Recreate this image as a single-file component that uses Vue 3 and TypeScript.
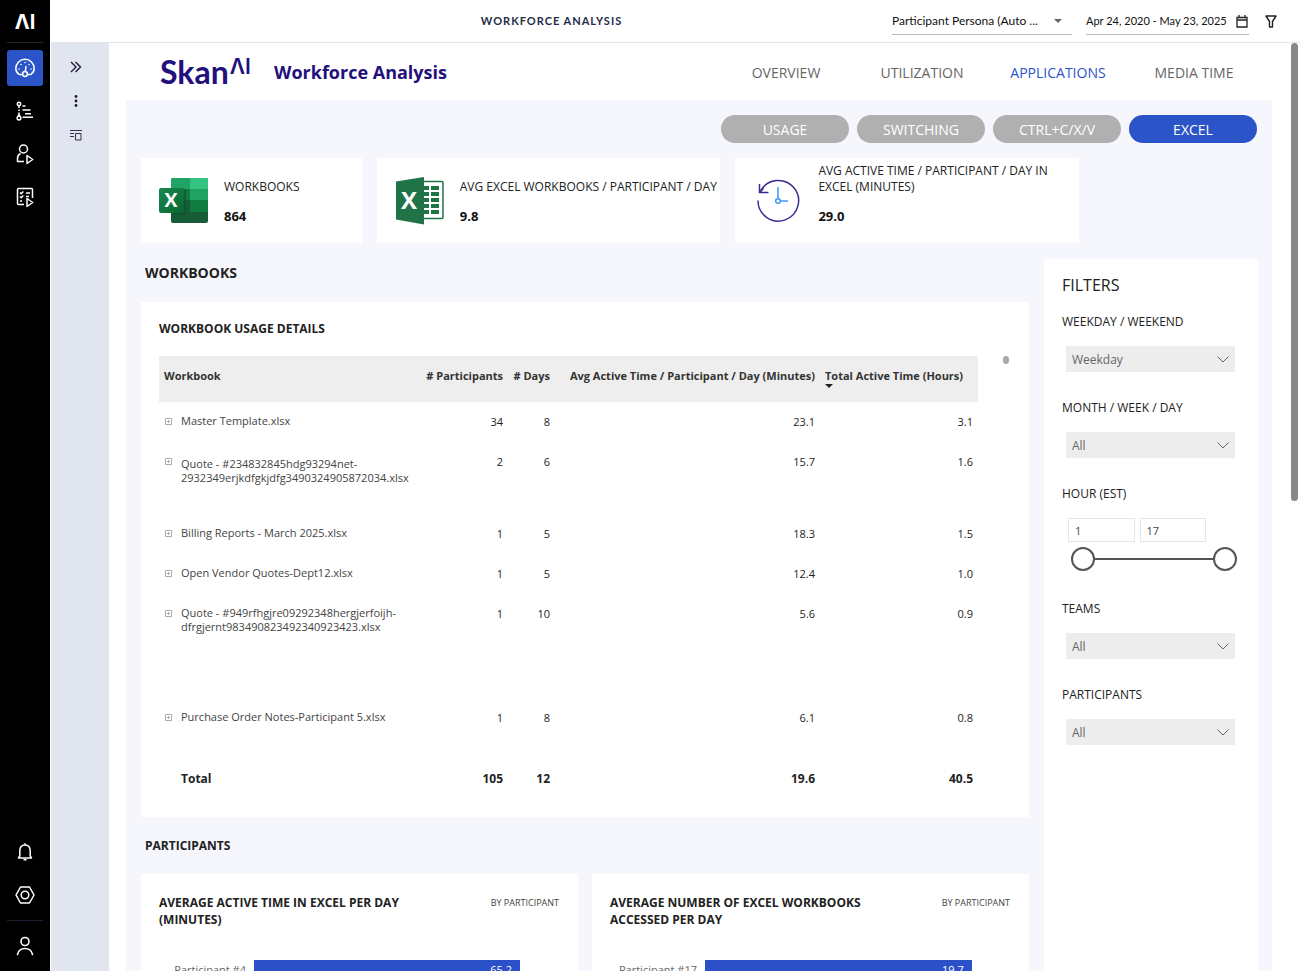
<script setup lang="ts">
import { ref } from 'vue'

interface WorkbookRow {
  name: string[]
  participants: number
  days: number
  avg: string
  total: string
  size: 'short' | 'medium' | 'tall' | 'last'
}

const tabs = ['OVERVIEW', 'UTILIZATION', 'APPLICATIONS', 'MEDIA TIME']
const activeTab = ref('APPLICATIONS')
const views = ['USAGE', 'SWITCHING', 'CTRL+C/X/V', 'EXCEL']
const activeView = ref('EXCEL')

const rows: WorkbookRow[] = [
  { name: ['Master Template.xlsx'], participants: 34, days: 8, avg: '23.1', total: '3.1', size: 'short' },
  { name: ['Quote - #234832845hdg93294net-', '2932349erjkdfgkjdfg3490324905872034.xlsx'], participants: 2, days: 6, avg: '15.7', total: '1.6', size: 'medium' },
  { name: ['Billing Reports - March 2025.xlsx'], participants: 1, days: 5, avg: '18.3', total: '1.5', size: 'short' },
  { name: ['Open Vendor Quotes-Dept12.xlsx'], participants: 1, days: 5, avg: '12.4', total: '1.0', size: 'short' },
  { name: ['Quote - #949rfhgjre09292348hergjerfoijh-', 'dfrgjernt983490823492340923423.xlsx'], participants: 1, days: 10, avg: '5.6', total: '0.9', size: 'tall' },
  { name: ['Purchase Order Notes-Participant 5.xlsx'], participants: 1, days: 8, avg: '6.1', total: '0.8', size: 'last' },
]

const charts = [
  { title: 'AVERAGE ACTIVE TIME IN EXCEL PER DAY (MINUTES)', label: 'Participant #4', value: 65.2, max: 75 },
  { title: 'AVERAGE NUMBER OF EXCEL WORKBOOKS ACCESSED PER DAY', label: 'Participant #17', value: 19.7, max: 22.6 },
]

const hourFrom = ref(1)
const hourTo = ref(17)
</script>

<template>
  <div class="app">
    <nav class="rail" aria-label="Main">
      <div class="brand">ΛI</div>
      <hr class="rule">
      <button class="rail-btn active" aria-label="Dashboard">
        <svg width="22" height="22" viewBox="0 0 22 22" fill="none" stroke="currentColor" stroke-width="1.5" stroke-linecap="round">
          <path d="M8.500 17.500H5.200C3 16 1.800 14 1.800 11.500a9.200 9.200 0 0 1 18.400 0c0 2.500-1.200 4.500-3.400 6H13.500" />
          <circle cx="11" cy="17" r="2.400" />
          <path d="M11.300 14.500 12 9.500" />
          <path d="M5 12h.1M17 12h.1M7 7.500h.1M11 5.500h.1M15 7.500h.1" />
        </svg>
      </button>
      <button class="rail-btn" aria-label="Process">
        <svg width="22" height="22" viewBox="0 0 22 22" fill="none" stroke="currentColor" stroke-width="1.500">
          <circle cx="5" cy="4" r="1.700" /><path d="m5 14.500 1.800 3a1.900 1.900 0 1 1-3.600 0z" />
          <path d="M5 5.700v2.300M5 9.500v1.500M5 12.500v2M8.500 6h3M8.500 10h8M11 13.800h6M8.500 17.200h10.500" />
        </svg>
      </button>
      <button class="rail-btn" aria-label="Persona">
        <svg width="22" height="22" viewBox="0 0 22 22" fill="none" stroke="currentColor" stroke-width="1.500" stroke-linejoin="round">
          <circle cx="9.500" cy="6" r="4" />
          <path d="M6.500 10.500c-2 1-3 2.500-3 5V18.500H10M13 12.500v8l5.700-4z" />
        </svg>
      </button>
      <button class="rail-btn" aria-label="Tasks">
        <svg width="22" height="22" viewBox="0 0 22 22" fill="none" stroke="currentColor" stroke-width="1.500" stroke-linejoin="round">
          <path d="M18.500 12V3.500a1 1 0 0 0-1-1h-13a1 1 0 0 0-1 1v14a1 1 0 0 0 1 1H10" />
          <path d="m6 6.500 1.200 1.200L9.300 5.500M6 10.500l1.200 1.200 2.100-2.200M6 15h2M12 7h4M12 10.500h3M13 12.500v8l5.700-4z" />
        </svg>
      </button>
      <div class="rail-fill"></div>
      <button class="rail-btn" aria-label="Notifications">
        <svg width="22" height="22" viewBox="0 0 22 22" fill="none" stroke="currentColor" stroke-width="1.500" stroke-linejoin="round">
          <path d="M4.500 17h13l-1.300-2v-5c0-3.700-2-6-5.200-6s-5.200 2.300-5.200 6v5zM11 2.300V4M9.500 18.800h3" />
        </svg>
      </button>
      <button class="rail-btn" aria-label="Settings">
        <svg width="22" height="22" viewBox="0 0 22 22" fill="none" stroke="currentColor" stroke-width="1.500" stroke-linejoin="round">
          <path d="M6.500 3h9l4.500 8-4.500 8h-9L2 11z" /><circle cx="11" cy="11" r="3.800" />
        </svg>
      </button>
      <hr class="rule low">
      <button class="rail-btn" aria-label="Account">
        <svg width="22" height="22" viewBox="0 0 22 22" fill="none" stroke="currentColor" stroke-width="1.600" stroke-linecap="round">
          <circle cx="11" cy="6.500" r="4" /><path d="M3.500 19.500c.8-4 3.500-6 7.500-6s6.700 2 7.500 6" />
        </svg>
      </button>
    </nav>

    <div class="shell">
      <header class="topbar">
        <h1>WORKFORCE ANALYSIS</h1>
        <div class="persona">
          <select aria-label="Participant persona"><option>Participant Persona (Auto ...</option></select>
          <svg class="caret" width="8" height="4" viewBox="0 0 8 4"><path d="M0 0h8L4 4z" fill="#666" /></svg>
        </div>
        <button class="dates">
          <span>Apr 24, 2020 - May 23, 2025</span>
          <svg width="12" height="13" viewBox="0 0 12 13" fill="none" stroke="#222" stroke-width="1.300"><path d="M1 2.500h10v9.500H1zM1 5h10M3 0v2.500M9 0v2.500" /></svg>
        </button>
        <button class="funnel" aria-label="Filter">
          <svg width="12" height="13" viewBox="0 0 12 13" fill="none" stroke="#222" stroke-width="1.400" stroke-linejoin="round"><path d="M1 1h10L7.500 6.500V12h-3V6.500z" /></svg>
        </button>
      </header>

      <div class="body">
        <aside class="tools">
          <button aria-label="Expand">
            <svg width="12" height="12" viewBox="0 0 12 12" fill="none" stroke="#1c1c3c" stroke-width="1.400"><path d="m1 1 5 5-5 5M5.500 1l5 5-5 5" /></svg>
          </button>
          <button aria-label="More">
            <svg width="12" height="12" viewBox="0 0 12 12" fill="#1c1c3c"><circle cx="6" cy="1.500" r="1.400" /><circle cx="6" cy="6" r="1.400" /><circle cx="6" cy="10.500" r="1.400" /></svg>
          </button>
          <button aria-label="Layout">
            <svg width="12" height="12" viewBox="0 0 12 12" fill="none" stroke="#33334d" stroke-width="1"><path d="M0 1.500h12M0 4.500h4M0 7.500h4M5.500 4.500h5.500v6.500H5.500z" /></svg>
          </button>
        </aside>

        <main class="report">
          <div class="report-head">
            <div class="logo">Skan<span>ΛI</span></div>
            <h2>Workforce Analysis</h2>
            <nav class="tabs" aria-label="Report">
              <a v-for="t in tabs" :key="t" href="#" :class="{ on: t === activeTab }" @click.prevent="activeTab = t">{{ t }}</a>
            </nav>
          </div>

          <div class="canvas">
            <div class="pills">
              <button v-for="v in views" :key="v" :class="{ on: v === activeView }" @click="activeView = v">{{ v }}</button>
            </div>

            <div class="stats">
              <section class="stat">
                <svg width="50" height="48" viewBox="0 0 50 48">
                  <defs><linearGradient id="xl" x1="0" y1="0" x2="1" y2="1"><stop offset="0" stop-color="#18884f" /><stop offset="1" stop-color="#0b6631" /></linearGradient></defs>
                  <rect x="12" y="1" width="37" height="45" rx="2" fill="#185c37" />
                  <path d="M14 1h17v11H12V3a2 2 0 0 1 2-2z" fill="#21a366" />
                  <path d="M31 1h16a2 2 0 0 1 2 2v9H31z" fill="#33c481" />
                  <path d="M12 12h19v11H12zM31 23h18v12H31z" fill="#107c41" />
                  <path d="M31 12h18v11H31z" fill="#21a366" />
                  <path d="M12 23h19v12H12z" fill="#185c37" />
                  <rect x="12" y="12" width="15" height="26" rx="1" fill="#0d4f2b" opacity=".55" />
                  <rect x="0" y="11" width="25" height="25" rx="2" fill="url(#xl)" />
                  <text x="12" y="30" text-anchor="middle" font-family="Lato, sans-serif" font-weight="900" font-size="19" fill="#fff">X</text>
                </svg>
                <div><h3>WORKBOOKS</h3><strong>864</strong></div>
              </section>
              <section class="stat">
                <svg width="50" height="48" viewBox="0 0 50 48">
                  <rect x="26" y="4.500" width="22" height="37" rx="1" fill="#fff" stroke="#1f7346" stroke-width="1.500" />
                  <path d="M28 9h6v4h-6zM36 9h8v4h-8zM28 15h6v4h-6zM36 15h8v4h-8zM28 21h6v4h-6zM36 21h8v4h-8zM28 27h6v4h-6zM36 27h8v4h-8zM28 33h6v4h-6zM36 33h8v4h-8z" fill="#1f7346" />
                  <path d="M1 4.500 29 0v47.500L1 42.500z" fill="#1f7346" />
                  <text x="14" y="32" text-anchor="middle" font-family="'Open Sans', sans-serif" font-weight="700" font-size="24" fill="#fff">X</text>
                </svg>
                <div><h3>AVG EXCEL WORKBOOKS / PARTICIPANT / DAY</h3><strong>9.8</strong></div>
              </section>
              <section class="stat">
                <svg width="50" height="48" viewBox="0 0 50 48" fill="none">
                  <path d="M5 23.500A20.300 20.300 0 1 0 7.500 14" stroke="#3a2c92" stroke-width="1.500" />
                  <path d="M6.500 7v8.500h9M6.500 15.500l4-4" stroke="#3a2c92" stroke-width="1.500" />
                  <path d="M25 10v12M27.500 24H35" stroke="#3f97f6" stroke-width="1.500" />
                  <circle cx="25" cy="24" r="2.300" stroke="#3f97f6" stroke-width="1.500" />
                </svg>
                <div><h3>AVG ACTIVE TIME / PARTICIPANT / DAY IN EXCEL (MINUTES)</h3><strong>29.0</strong></div>
              </section>
            </div>

            <div class="columns">
              <div class="left">
                <h3 class="section">WORKBOOKS</h3>
                <section class="card usage">
                  <h4>WORKBOOK USAGE DETAILS</h4>
                  <div class="table-wrap">
                    <div class="table-box">
                      <table>
                        <colgroup><col><col class="c-part"><col class="c-days"><col class="c-avg"><col class="c-total"></colgroup>
                        <thead>
                          <tr>
                            <th>Workbook</th><th># Participants</th><th># Days</th>
                            <th>Avg Active Time / Participant / Day (Minutes)</th>
                            <th class="sorted">Total Active Time (Hours)<svg width="8" height="4" viewBox="0 0 8 4"><path d="M0 0h8L4 4z" fill="#222" /></svg></th>
                          </tr>
                        </thead>
                        <tbody>
                          <tr v-for="r in rows" :key="r.name[0]" :class="r.size">
                            <td>
                              <div class="book">
                                <button aria-label="Expand row"><svg width="7" height="7" viewBox="0 0 7 7" fill="none" stroke="#aaa"><path d="M.5.5h6v6h-6zM2 3.500h3M3.500 2v3" /></svg></button>
                                <span><template v-for="(part, i) in r.name" :key="part"><br v-if="i">{{ part }}</template></span>
                              </div>
                            </td>
                            <td>{{ r.participants }}</td><td>{{ r.days }}</td><td>{{ r.avg }}</td><td>{{ r.total }}</td>
                          </tr>
                        </tbody>
                        <tfoot><tr><td>Total</td><td>105</td><td>12</td><td>19.6</td><td>40.5</td></tr></tfoot>
                      </table>
                    </div>
                    <i class="grip"></i>
                  </div>
                </section>

                <h3 class="section second">PARTICIPANTS</h3>
                <div class="charts">
                  <section v-for="c in charts" :key="c.label" class="card chart">
                    <div class="chart-head"><h4>{{ c.title }}</h4><small>BY PARTICIPANT</small></div>
                    <div class="bar-row">
                      <span>{{ c.label }}</span>
                      <div class="plot"><div class="bar" :style="{ width: (c.value / c.max) * 100 + '%' }">{{ c.value }}</div></div>
                    </div>
                  </section>
                </div>
              </div>

              <aside class="filters">
                <h3>FILTERS</h3>
                <div class="field"><label for="wd">WEEKDAY / WEEKEND</label>
                  <div class="drop"><select id="wd"><option>Weekday</option></select><svg width="12" height="7" viewBox="0 0 12 7"><path d="m.5.5 5.500 5.500L11.500.5" fill="none" stroke="#666" /></svg></div></div>
                <div class="field"><label for="mw">MONTH / WEEK / DAY</label>
                  <div class="drop"><select id="mw"><option>All</option></select><svg width="12" height="7" viewBox="0 0 12 7"><path d="m.5.5 5.500 5.500L11.500.5" fill="none" stroke="#666" /></svg></div></div>
                <div class="field"><label for="hour">HOUR (EST)</label>
                  <div class="hours"><input id="hour" v-model.number="hourFrom" type="text"><input v-model.number="hourTo" type="text" aria-label="Hour to"></div>
                  <div class="range">
                    <input v-model.number="hourFrom" type="range" min="1" max="17" aria-label="From hour">
                    <input v-model.number="hourTo" type="range" min="1" max="17" aria-label="To hour">
                  </div></div>
                <div class="field"><label for="tm">TEAMS</label>
                  <div class="drop"><select id="tm"><option>All</option></select><svg width="12" height="7" viewBox="0 0 12 7"><path d="m.5.5 5.500 5.500L11.500.5" fill="none" stroke="#666" /></svg></div></div>
                <div class="field"><label for="pt">PARTICIPANTS</label>
                  <div class="drop"><select id="pt"><option>All</option></select><svg width="12" height="7" viewBox="0 0 12 7"><path d="m.5.5 5.500 5.500L11.500.5" fill="none" stroke="#666" /></svg></div></div>
              </aside>
            </div>
          </div>
        </main>
        <div class="scroll-thumb"></div>
      </div>
    </div>
  </div>
</template>

<style>
body { margin: 0; overflow: hidden; }
</style>

<style scoped>
* { box-sizing: border-box; }
.app { display: flex; height: 100vh; background: #fff; color: #222; font-family: 'Open Sans', 'Noto Sans', sans-serif; font-size: 12px; line-height: 16px; }
h1, h2, h3, h4 { margin: 0; }
button { border: 0; padding: 0; background: none; font: inherit; color: inherit; cursor: pointer; }
select, input { font: inherit; color: inherit; margin: 0; }
svg { display: block; flex: none; }

.rail { width: 50px; flex: none; background: #000; color: #fff; display: flex; flex-direction: column; align-items: center; gap: 7px; padding-bottom: 7px; }
.brand { height: 42px; margin-bottom: -7px; font: 700 20px/44px Inter, sans-serif; }
.rule { width: 36px; height: 1px; border: 0; margin: 0; background: #25282e; }
.rule.low { background: #1c2030; }
.rail-btn { width: 36px; height: 36px; border-radius: 3px; display: grid; place-items: center; }
.rail-btn.active { background: #2b54c8; }
.rail-fill { flex: 1; }

.shell { flex: 1; min-width: 0; display: flex; flex-direction: column; padding-left: 1px; }
.topbar { height: 43px; flex: none; display: flex; align-items: flex-start; border-bottom: 1px solid #e3e4e8; padding: 8px 23px 0 0; font-family: Lato, sans-serif; }
.topbar h1 { flex: 1; margin-left: 160px; text-align: center; font-weight: 700; font-size: 11px; line-height: 26px; letter-spacing: 1px; color: #1f2c47; }
.persona { width: 180px; height: 27px; border-bottom: 1px solid #bbb; display: grid; align-items: center; }
.persona select { grid-area: 1 / 1; appearance: none; border: 0; background: none; padding: 0; height: 26px; font-size: 12px; }
.persona .caret { grid-area: 1 / 1; justify-self: end; margin-right: 10px; }
.persona select { font-size: 12px; }
.dates { width: 163px; height: 27px; border-bottom: 1px solid #bbb; margin-left: 14px; display: flex; align-items: center; justify-content: space-between; font-size: 11px; white-space: nowrap; }
.dates svg { margin-right: 1px; }
.persona select, .dates { color: #111; }
.funnel { height: 27px; margin-left: 16px; width: 12px; }

.body { flex: 1; min-height: 0; display: flex; position: relative; }
.tools { width: 58px; flex: none; background: #e1e5ef; display: flex; flex-direction: column; align-items: center; gap: 10px; padding: 12px 9px 0 0; }
.tools button { width: 24px; height: 24px; display: grid; place-items: center; }
.report { flex: 1; min-width: 0; overflow-y: auto; scrollbar-width: none; padding: 0 28px 0 17px; }
.scroll-thumb { position: absolute; right: 2px; top: 0; width: 7px; height: 458px; border-radius: 4px; background: #888; }

.report-head { height: 57px; display: flex; align-items: center; padding: 0 14px 0 34px; }
.logo { width: 114px; color: #23107d; font: 700 32px/57px Lato, sans-serif; display: flex; align-items: center; }
.logo span { font: 600 21px/24px Inter, sans-serif; margin: 0 0 10px 1px; }
.report-head h2 { flex: 1; color: #23107d; font-size: 18px; line-height: 24px; font-weight: 700; white-space: nowrap; }
.tabs { display: flex; gap: 8px; padding-top: 2px; }
.tabs a { width: 128px; text-align: center; text-decoration: none; color: #666; font-size: 14px; line-height: 20px; }
.tabs a.on { color: #2b54c8; }

.canvas { background: #f6f7fd; padding: 15px 14px 24px 15px; }
.pills { display: flex; justify-content: flex-end; gap: 8px; padding-right: 1px; }
.pills button { width: 128px; height: 28px; border-radius: 14px; background: #b0b0b0; color: #fff; font-size: 14px; line-height: 26px; padding-top: 2px; }
.pills button.on { background: #2b54c8; }

.stats { display: grid; grid-template-columns: 221fr 344fr 344fr; gap: 15px; margin: 15px 179px 0 0; }
.stat { background: #fff; height: 85px; display: flex; align-items: center; gap: 15px; padding-left: 18px; }
.stat div { display: flex; flex-direction: column; justify-content: flex-end; height: 85px; padding-bottom: 18px; }
.stat h3 { font-weight: 400; font-size: 12px; line-height: 16px; margin-bottom: 12px; }
.stat strong { font-size: 13px; line-height: 18px; color: #111; }

.columns { display: grid; grid-template-columns: minmax(0, 1fr) 214px; gap: 15px; margin-top: 16px; }
.section { font-size: 14px; line-height: 18px; padding: 5px 4px 20px; }
.section.second { font-size: 12px; padding: 20px 4px 19px; }
.card { background: #fff; padding: 18px; }
.card h4 { font-size: 12px; line-height: 17px; }
.usage { min-height: 515px; }
.table-wrap { display: flex; margin-top: 19px; }
.table-box { flex: 1; min-width: 0; }
table { width: 100%; table-layout: fixed; border-collapse: collapse; }
.c-part { width: 100px; } .c-days { width: 47px; } .c-avg { width: 265px; } .c-total { width: 158px; }
.grip { width: 6px; height: 8px; border-radius: 3px; background: #aaa; margin: 0 2px 0 25px; }
th { height: 46px; background: #eee; vertical-align: top; padding: 12px 5px 0 0; text-align: right; font-size: 11px; line-height: 16px; white-space: nowrap; color: #333; }
th:first-child { text-align: left; padding-left: 5px; }
th.sorted { text-align: left; padding-left: 5px; }
td { vertical-align: top; text-align: right; padding: 12px 5px 0 0; font-size: 11px; line-height: 16px; }
td:first-child { text-align: left; color: #444; padding-left: 6px; }
.book { display: flex; gap: 9px; font-size: 11px; line-height: 14px; white-space: nowrap; }
.book button { height: 14px; }
tr.short { height: 40px; } tr.medium { height: 72px; } tr.tall { height: 104px; } tr.last { height: 61px; }
.medium .book span { padding-top: 3px; }
tfoot td { font-weight: 700; font-size: 12px; }
tfoot td:first-child { padding-left: 22px; color: #222; }

.charts { display: grid; grid-template-columns: 1fr 1fr; gap: 14px; }
.chart { padding-top: 20px; }
.chart-head { display: flex; justify-content: space-between; padding-right: 1px; }
.chart-head h4 { max-width: 270px; }
.chart-head small { font-size: 9px; line-height: 17px; color: #444; }
.bar-row { display: grid; grid-template-columns: 87px 1fr; gap: 8px; margin-top: 32px; line-height: 20px; font-size: 11px; }
.bar-row span { text-align: right; color: #666; white-space: nowrap; }
.bar { background: #2b50c8; color: #fff; height: 20px; text-align: right; padding-right: 8px; }

.filters { background: #fff; padding: 15px 23px 0 18px; }
.filters h3 { font-size: 16px; line-height: 22px; font-weight: 400; margin-bottom: 18px; }
.field { margin-bottom: 28px; }
.field label { display: block; font-size: 12px; line-height: 16px; margin-bottom: 16px; }
.drop { display: grid; align-items: center; margin-left: 4px; background: #ededed; color: #666; }
.drop select { grid-area: 1 / 1; appearance: none; height: 26px; border: 0; background: none; padding: 2px 6px 0; }
.drop svg { grid-area: 1 / 1; justify-self: end; margin-right: 6px; pointer-events: none; }
.hours { display: flex; gap: 5px; margin: 0 29px 0 6px; }
.hours input { flex: 1; min-width: 0; height: 24px; border: 1px solid #e6e6e6; background: #fff; padding: 0 6px; font-size: 11px; color: #444; }
.range { display: grid; margin: 5px -2px 30px 9px; height: 24px; align-items: center; background: linear-gradient(#555, #555) center / 142px 2px no-repeat; }
.range input { grid-area: 1 / 1; width: 100%; height: 24px; appearance: none; background: none; pointer-events: none; }
.range input::-webkit-slider-thumb { appearance: none; pointer-events: auto; width: 24px; height: 24px; border-radius: 50%; border: 2px solid #555; background: #fff; }
</style>
